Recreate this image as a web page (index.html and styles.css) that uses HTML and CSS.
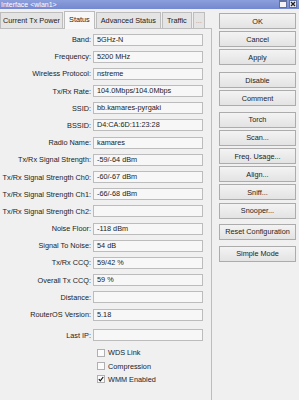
FILE: index.html
```html
<!DOCTYPE html>
<html lang="en">
<head>
    <meta charset="UTF-8">
    <title>Interface &lt;wlan1&gt;</title>
    <link rel="stylesheet" href="styles.css">
</head>
<body>
    <div class="titlebar">
        <span class="title">Interface &lt;wlan1&gt;</span>
        <div class="controls">
            <span class="ctl ctl-max"></span>
            <span class="ctl ctl-close">
                <svg width="6" height="6" viewBox="0 0 6 6"><path d="M1 1L5 5M5 1L1 5" stroke="#222" stroke-width="1.3"/></svg>
            </span>
        </div>
    </div>

    <div class="main">
        <div class="left">
            <div class="tabs">
                <div class="tab tab-first">Current Tx Power</div>
                <div class="tab active">Status</div>
                <div class="tab">Advanced Status</div>
                <div class="tab">Traffic</div>
                <div class="tab tab-more">...</div>
            </div>

            <div class="panel">
                <div class="row"><label>Band:</label><div class="field">5GHz-N</div></div>
                <div class="row"><label>Frequency:</label><div class="field">5200 MHz</div></div>
                <div class="row"><label>Wireless Protocol:</label><div class="field">nstreme</div></div>
                <div class="row"><label>Tx/Rx Rate:</label><div class="field">104.0Mbps/104.0Mbps</div></div>
                <div class="row"><label>SSID:</label><div class="field">bb.kamares-pyrgaki</div></div>
                <div class="row"><label>BSSID:</label><div class="field">D4:CA:6D:11:23:28</div></div>
                <div class="row"><label>Radio Name:</label><div class="field">kamares</div></div>
                <div class="row"><label>Tx/Rx Signal Strength:</label><div class="field">-59/-64 dBm</div></div>
                <div class="row"><label>Tx/Rx Signal Strength Ch0:</label><div class="field">-60/-67 dBm</div></div>
                <div class="row"><label>Tx/Rx Signal Strength Ch1:</label><div class="field">-66/-68 dBm</div></div>
                <div class="row"><label>Tx/Rx Signal Strength Ch2:</label><div class="field"></div></div>
                <div class="row"><label>Noise Floor:</label><div class="field">-118 dBm</div></div>
                <div class="row"><label>Signal To Noise:</label><div class="field">54 dB</div></div>
                <div class="row"><label>Tx/Rx CCQ:</label><div class="field">59/42 %</div></div>
                <div class="row"><label>Overall Tx CCQ:</label><div class="field">59 %</div></div>
                <div class="row"><label>Distance:</label><div class="field"></div></div>
                <div class="row"><label>RouterOS Version:</label><div class="field">5.18</div></div>
                <div class="row row-sep"><label>Last IP:</label><div class="field"></div></div>

                <div class="checks">
                    <div class="check"><span class="box"></span>WDS Link</div>
                    <div class="check"><span class="box"></span>Compression</div>
                    <div class="check">
                        <span class="box">
                            <svg width="6" height="6" viewBox="0 0 6 6"><path d="M0.8 3.2L2.3 4.8L5.2 1" fill="none" stroke="#111" stroke-width="1.2"/></svg>
                        </span>WMM Enabled
                    </div>
                </div>
            </div>
        </div>

        <div class="right">
            <button>OK</button>
            <button>Cancel</button>
            <button>Apply</button>
            <button class="grp-a">Disable</button>
            <button>Comment</button>
            <button class="grp-b">Torch</button>
            <button>Scan...</button>
            <button>Freq. Usage...</button>
            <button>Align...</button>
            <button>Sniff...</button>
            <button>Snooper...</button>
            <button class="grp-c">Reset Configuration</button>
            <button class="grp-d">Simple Mode</button>
        </div>
    </div>
</body>
</html>
```

FILE: styles.css
```css
body {
    margin: 0;
    width: 299px;
    height: 400px;
    overflow: hidden;
    background: #f0f0f0;
    font-family: 'Liberation Sans', Arial, sans-serif;
    font-size: 7.3px;
    color: #1c1c1c;
}

.titlebar {
    height: 9px;
    display: flex;
    align-items: center;
    justify-content: space-between;
    background: linear-gradient(180deg, #8c9fdc, #7388cf);
    color: #fff;
    padding-left: 1px;
}

.title {
    font-size: 7px;
    line-height: 9px;
}

.controls {
    display: flex;
    gap: 2px;
    padding-right: 2px;
    align-self: flex-start;
}

.ctl {
    width: 8px;
    height: 8px;
    box-sizing: border-box;
    background: #e9ecf4;
    border: 1px solid #5f6f9f;
    display: flex;
    align-items: center;
    justify-content: center;
}

.ctl-max {
    background: #f4f4f4;
    border-top-width: 2px;
}

.main {
    display: flex;
    height: 391px;
}

.left {
    width: 212px;
    display: flex;
    flex-direction: column;
}

.tabs {
    height: 19px;
    display: flex;
    align-items: flex-end;
    gap: 1px;
}

.tab {
    height: 16px;
    line-height: 15px;
    padding: 0 4px;
    box-sizing: border-box;
    background: #e4e4e4;
    border: 1px solid #bdbdbd;
    border-bottom: none;
    white-space: nowrap;
}

.tab-first {
    padding: 0 2px;
}

.tab.active {
    height: 18px;
    line-height: 15px;
    background: #f7f7f7;
    margin-bottom: -1px;
    position: relative;
}

.tab-more {
    padding: 0 2px;
    color: #9a9a9a;
}

.panel {
    flex: 1;
    border-top: 1px solid #bdbdbd;
    border-right: 1px solid #bdbdbd;
    padding-top: 4.5px;
    display: flex;
    flex-direction: column;
    gap: 5.2px;
}

.row {
    display: flex;
    align-items: center;
    height: 12px;
}

.row label {
    width: 93px;
    padding-right: 2px;
    box-sizing: border-box;
    text-align: right;
    white-space: nowrap;
}

.field {
    width: 110px;
    height: 12px;
    box-sizing: border-box;
    border: 1px solid #bcbcbc;
    background: #f7f7f7;
    padding-left: 3px;
    line-height: 10px;
    white-space: nowrap;
    overflow: hidden;
}

.row-sep {
    margin-top: 3.5px;
}

.checks {
    margin-top: 1.5px;
    padding-left: 97px;
    display: flex;
    flex-direction: column;
    gap: 3.3px;
}

.check {
    display: flex;
    align-items: center;
    height: 10px;
}

.box {
    width: 8px;
    height: 8px;
    box-sizing: border-box;
    border: 1px solid #b0b0b0;
    background: #fbfbfb;
    margin-right: 3px;
    display: flex;
    align-items: center;
    justify-content: center;
}

.right {
    padding: 4px 0 0 7px;
    display: flex;
    flex-direction: column;
    gap: 2.2px;
}

button {
    width: 77px;
    height: 16px;
    padding: 0;
    font-family: inherit;
    font-size: 7.3px;
    color: #1c1c1c;
    background: linear-gradient(180deg, #f3f3f3, #e3e3e3);
    border: 1px solid #acacac;
    border-radius: 0;
}

.grp-a {
    margin-top: 4.6px;
}

.grp-b {
    margin-top: 3.1px;
}

.grp-c {
    margin-top: 2.8px;
}

.grp-d {
    margin-top: 4.1px;
}
```
